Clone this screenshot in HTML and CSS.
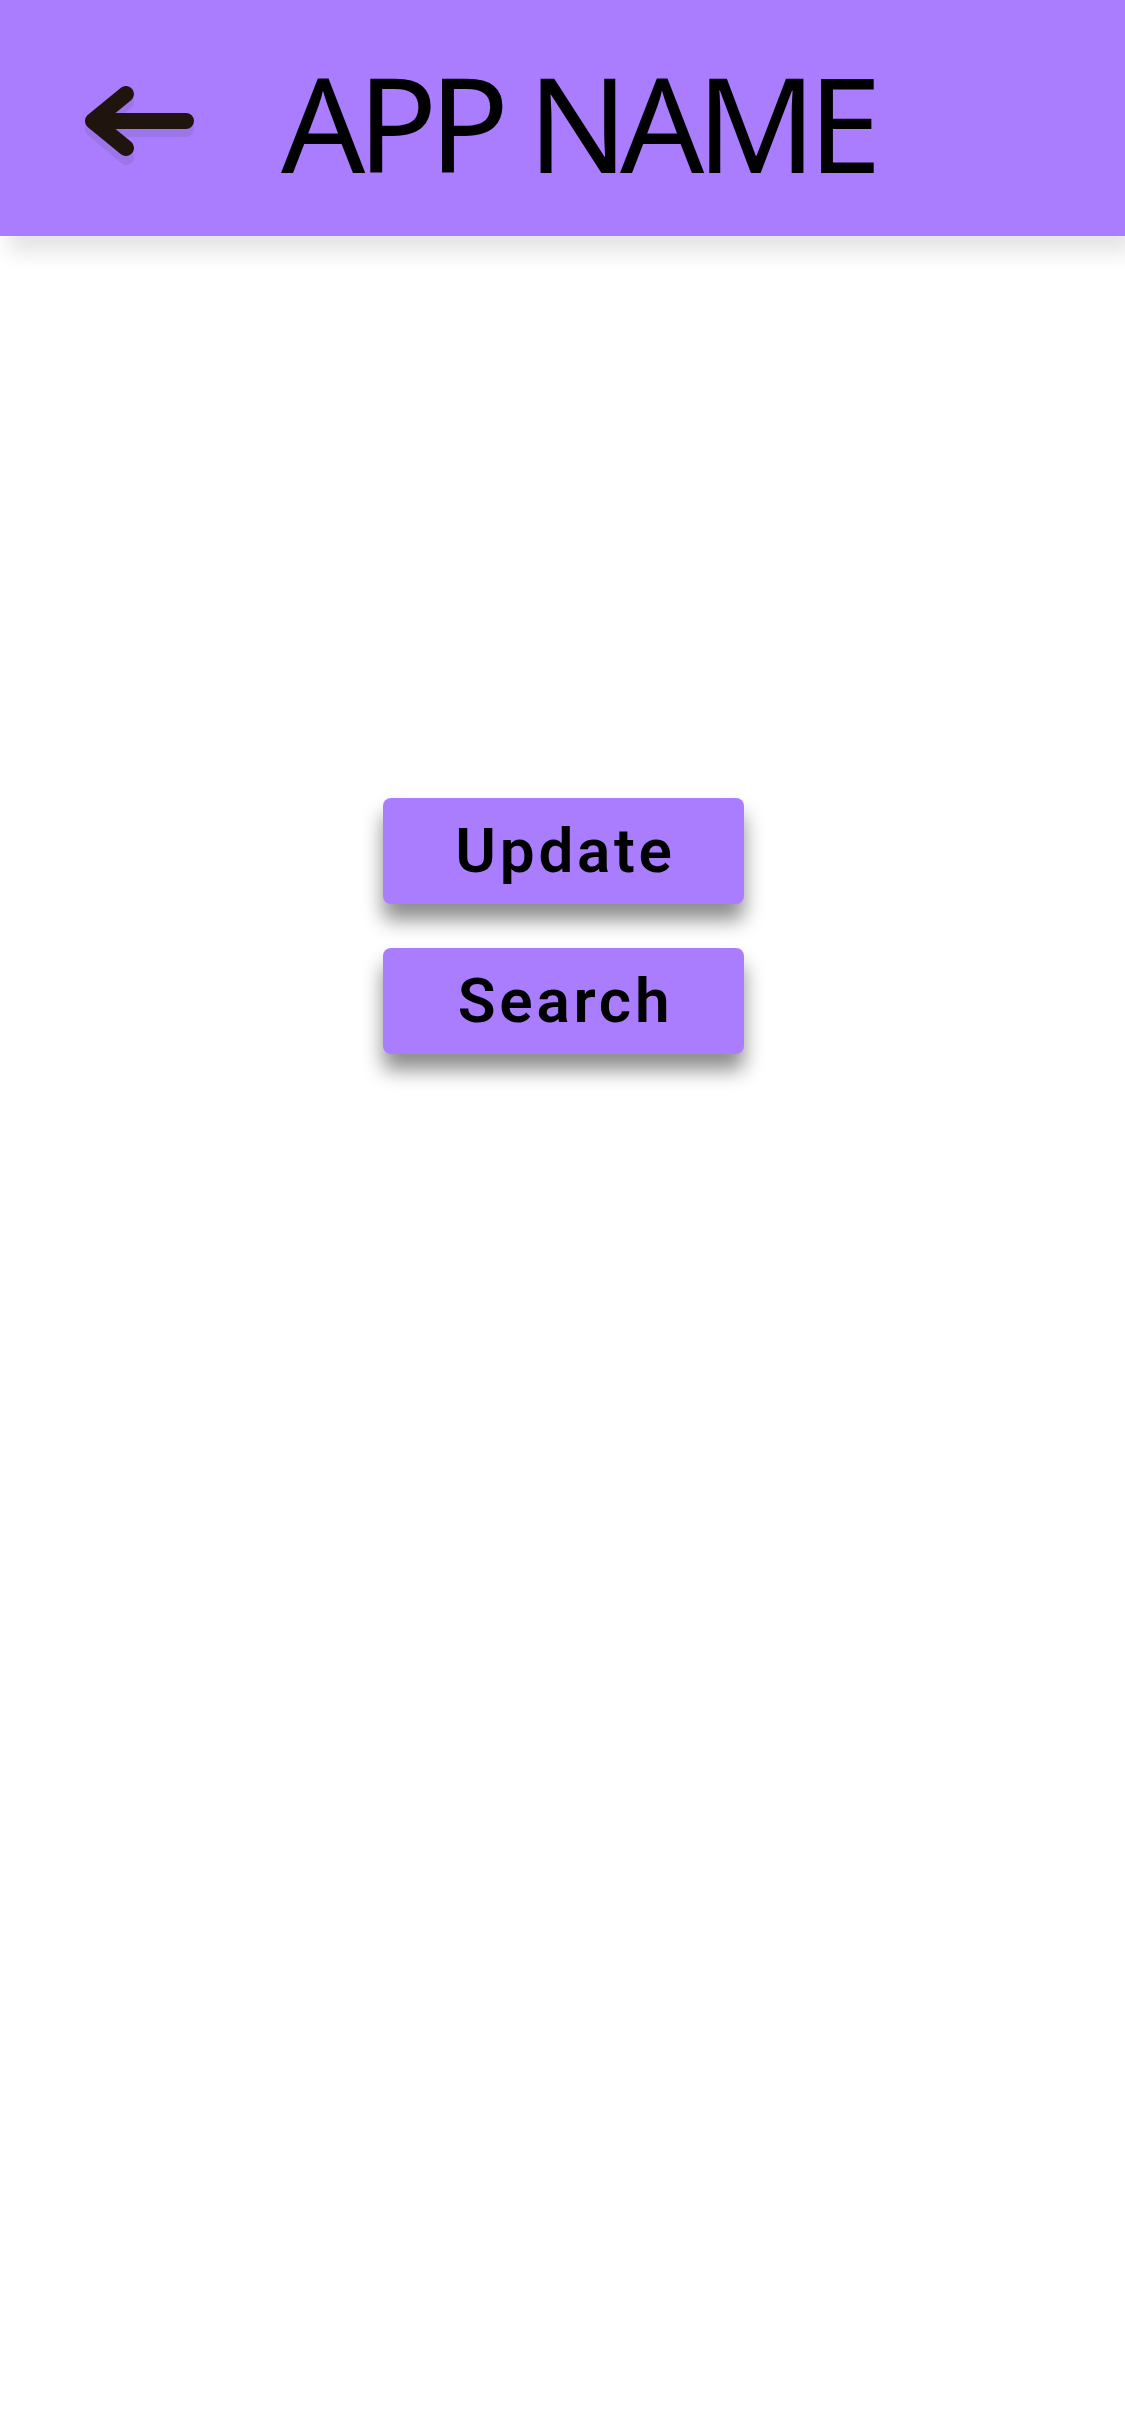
FILE: index.html
```html
<!DOCTYPE html>
<html lang="en">
<head>
<meta charset="utf-8">
<meta name="viewport" content="width=device-width, initial-scale=1">
<title>App Name</title>
<link rel="stylesheet" href="styles.css">
</head>
<body>
<header class="app-bar">
  <button class="back" type="button" aria-label="Back">
    <svg class="back-icon" viewBox="0 0 110 80" aria-hidden="true">
      <path class="arrow-shadow" d="M101 43H8M41 16L8 43L41 71"/>
      <path class="arrow" d="M101 35H8M41 8L8 35L41 62"/>
      <path class="arrow-head" d="M8 35L29 22V48Z"/>
    </svg>
  </button>
  <h1 class="title">APP NAME</h1>
</header>
<main class="actions">
  <button class="action" type="button">Update</button>
  <button class="action" type="button">Search</button>
</main>
</body>
</html>
```

FILE: styles.css
```css
body {
  margin: 0;
  background: #fff;
  color: #000;
}

.app-bar {
  box-sizing: border-box;
  display: flex;
  align-items: center;
  gap: 86px;
  height: 236px;
  padding: 8px 85px 0;
  background: #aa7dff;
  box-shadow: 8px 16px 20px rgba(0, 0, 0, 0.11);
}

.back {
  display: flex;
  padding: 16px 0 8px;
  border: 0;
  background: none;
  cursor: pointer;
}

.back-icon {
  width: 110px;
  height: 80px;
}

.arrow,
.arrow-shadow {
  fill: none;
  stroke: #1f140e;
  stroke-width: 16;
  stroke-linecap: round;
  stroke-linejoin: round;
}

.arrow-shadow {
  stroke: #9d75ea;
}

.arrow-head {
  fill: #1f140e;
}

.title {
  margin: 0;
  font: 400 132px/188px "Noto Sans", "Open Sans", sans-serif;
  letter-spacing: -0.06em;
  white-space: nowrap;
}

.actions {
  display: flex;
  flex-direction: column;
  align-items: center;
  gap: 44px;
  padding: 562px 24px 48px 26px;
}

.action {
  width: 361px;
  height: 106px;
  padding: 0 0 0 4px;
  border: 0;
  border-radius: 8px;
  background: #aa7dff;
  box-shadow: 0 16px 20px rgba(0, 0, 0, 0.45);
  color: #000;
  font: 600 62px/72px Roboto, sans-serif;
  letter-spacing: 0.06em;
  cursor: pointer;
}
```
